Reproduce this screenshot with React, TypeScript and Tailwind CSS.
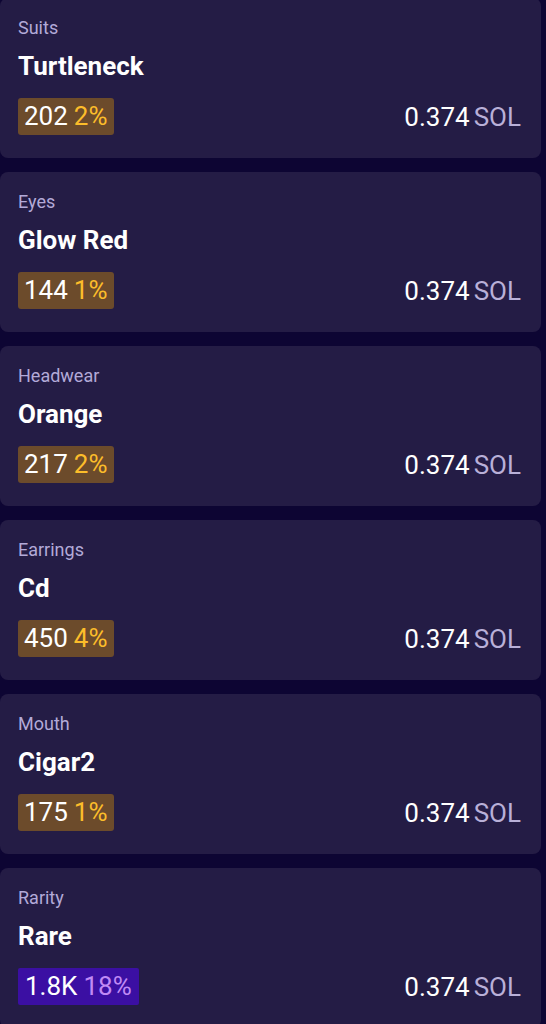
const traits = [
  { type: "Suits", name: "Turtleneck", count: "202", pct: "2%" },
  { type: "Eyes", name: "Glow Red", count: "144", pct: "1%" },
  { type: "Headwear", name: "Orange", count: "217", pct: "2%" },
  { type: "Earrings", name: "Cd", count: "450", pct: "4%" },
  { type: "Mouth", name: "Cigar2", count: "175", pct: "1%" },
  { type: "Rarity", name: "Rare", count: "1.8K", pct: "18%", rarity: true },
];

function TraitCard({ t }: { t: (typeof traits)[number] }) {
  return (
    <div className="bg-[#241c45] rounded-lg h-[160px] pt-[18px] pl-[18px] pr-[20px]">
      <div className="text-[18px] leading-[24px] text-[#b3aad8]">{t.type}</div>
      <div className="text-[26px] leading-[32px] font-bold text-white mt-[10px]">
        {t.name}
      </div>
      <div className="flex items-center justify-between mt-[16px]">
        <div
          className={
            t.rarity
              ? "h-[37px] px-[7px] flex items-center text-[26px] bg-[#3b0fa3] rounded-[2px]"
              : "h-[37px] px-[6px] flex items-center text-[26px] bg-[#6c4b2b] rounded-[3px]"
          }
        >
          <span className="text-white">{t.count}</span>
          <span className={t.rarity ? "ml-[6px] text-[#c08af5]" : "ml-[6px] text-[#fcbd2a]"}>
            {t.pct}
          </span>
        </div>
        <div className="text-[26px] leading-none">
          <span className="text-white">0.374</span>
          <span className="ml-[4px] text-[#b9b0d8]">SOL</span>
        </div>
      </div>
    </div>
  );
}

export default function App() {
  return (
    <div
      className="min-h-screen bg-[#0d0533] overflow-hidden"
      style={{ fontFamily: "Roboto, 'Liberation Sans', sans-serif" }}
    >
      <div className="w-[541px] -mt-[2px] flex flex-col gap-[14px]">
        {traits.map((t) => (
          <TraitCard key={t.type} t={t} />
        ))}
      </div>
    </div>
  );
}
